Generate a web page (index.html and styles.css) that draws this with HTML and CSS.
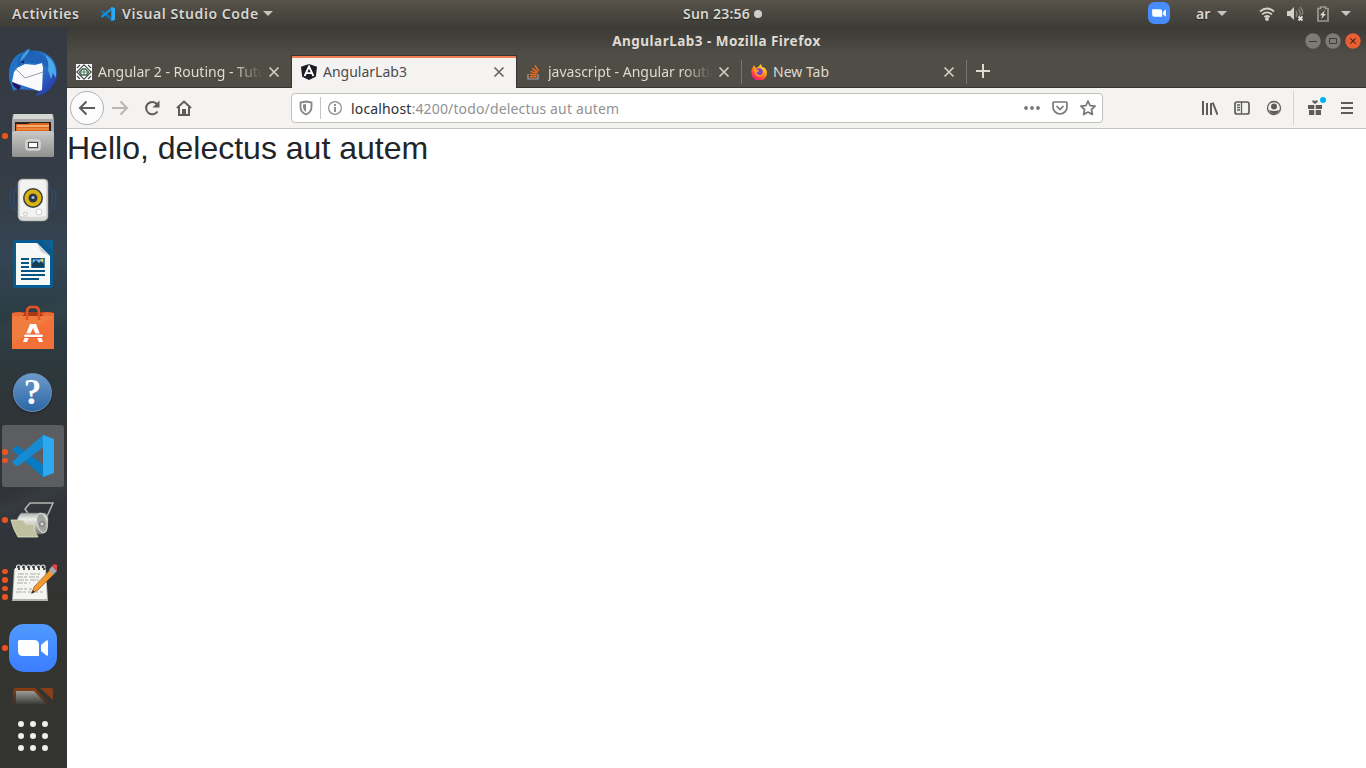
FILE: index.html
```html
<!DOCTYPE html>
<html lang="en">
<head>
<meta charset="utf-8">
<title>AngularLab3 - Mozilla Firefox</title>
<link rel="stylesheet" href="styles.css">
</head>
<body>
<header class="topbar">
  <div class="top-left">
    <span class="activities">Activities</span>
    <svg class="mini-code" width="16" height="16" viewBox="0 0 48 48"><path fill="#0879bf" d="M2 17l5-4 29 23v9z"/><path fill="#1593dc" d="M2 31l5 4 29-23V3z"/><path fill="#29aaf2" d="M34 2l11 5v34l-11 5z"/></svg>
    <span class="app-name">Visual Studio Code</span>
    <svg class="caret" width="10" height="5" viewBox="0 0 10 5"><path d="M0 0h10L5 5z"/></svg>
  </div>
  <div class="clock"><span>Sun 23:56</span><i></i></div>
  <div class="status">
    <svg class="tray-zoom" width="22" height="22" viewBox="0 0 48 48"><rect width="48" height="48" rx="14" fill="#488bff"/><path fill="#fff" d="M9 16h17q5 0 5 5v11H14q-5 0-5-5zM33 21l6-5v16l-6-5z"/></svg>
    <span class="lang">ar</span>
    <svg class="caret lang-caret" width="10" height="5" viewBox="0 0 10 5"><path d="M0 0h10L5 5z"/></svg>
    <svg class="wifi" width="16" height="14" viewBox="0 0 16 14" fill="none" stroke="#d3d0ca" stroke-width="1.8"><path d="M1 4.5q7-6 14 0M3 7.4q5-4 10 0M5.3 10q2.7-2 5.4 0"/><circle cx="8" cy="12" r="1" fill="#d3d0ca"/></svg>
    <svg class="volume" width="18" height="16" viewBox="0 0 18 16"><path fill="#d3d0ca" d="M0 5h3l4-4v13l-4-4H0z"/><path fill="none" stroke="#85827a" stroke-width="1.4" d="M9 5q2 3 0 6M11.5 3q3 4 1 7M13 1q4 4 2 8"/><path stroke="#e4e1da" stroke-width="1.8" d="M11.5 10.5l4 4m0-4l-4 4"/></svg>
    <svg class="battery" width="12" height="16" viewBox="0 0 12 16"><path fill="none" stroke="#9b9890" stroke-width="1.7" d="M1 2.5h2.5V1h5v1.500H11V15H1z"/><path fill="#e4e1da" d="M8 4L3 9.200h2.500L4 13l5-5H6.500z"/></svg>
    <svg class="caret" width="10" height="5" viewBox="0 0 10 5"><path d="M0 0h10L5 5z"/></svg>
  </div>
</header>
<div class="desktop">
<nav class="dock">
  <div class="slot">
    <svg width="48" height="48" viewBox="0 0 48 48"><defs><linearGradient id="bird" x1="0" y1="0" x2="1" y2="1"><stop stop-color="#1f6fc0"/><stop offset=".55" stop-color="#2877cf"/><stop offset="1" stop-color="#29249a"/></linearGradient></defs><path fill="url(#bird)" d="M0 28C-1 15 7 5 15 4q4-4 6-3l-1 2c17-2 28 8 28 22 0 11-8 20-17 22l-5 1 5-5-22-2-5 2C4 39 0 35 0 28z"/><path fill="#2062b8" d="M13 6c4-4 10-3 15-2 9 3 13 10 13 17l-8-5-18-2-6 4c-1-4 0-9 4-12z"/><path fill="#4aa9e6" d="M36 7c9 5 12 13 11 23l-3-5-2 6-3-9c1-6 0-11-3-15z"/><path fill="#45a0dc" d="M11 13q3-9 10-12-2 5-8 11z"/><path fill="#fafafc" d="M8 20l8-4 10 1 7-2 1 5-1 22-3 1L3 34l2-10z"/><path fill="none" stroke="#9b9da7" d="M7 21l9 9 18-6"/><circle cx="14" cy="14" r="1.300" fill="#182547"/><path fill="#28125e" d="M3 34l9 4-2 4C6 40 4 38 3 34z"/></svg>
  </div>
  <div class="slot"><span class="runs"><i></i></span>
    <svg width="48" height="48" viewBox="0 0 48 48"><defs><linearGradient id="metal" x1="0" y1="0" x2="0" y2="1"><stop stop-color="#c9c9c7"/><stop offset="1" stop-color="#90908e"/></linearGradient></defs><path fill="#a6a6a4" d="M4 2h40l1 6v34H3V8z"/><path fill="#d5d5d3" d="M5 2h38l1 5H4z"/><path fill="#272320" d="M6 10h36v10H6z"/><path fill="#df661f" d="M7 12h12l2-1h19v9H7z"/><path stroke="#ffe0a9" stroke-width="1.200" d="M8 14h32"/><path stroke="#f3a45a" d="M8 17h32"/><path fill="url(#metal)" d="M5 19h38l2 2v23q0 1-2 1H5q-2 0-2-1V21z"/><rect x="17" y="28" width="14" height="10" rx="2" fill="#bbb" stroke="#eee"/><rect x="19.500" y="30.500" width="9" height="5" fill="#fff" stroke="#4b4b4b"/></svg>
  </div>
  <div class="slot">
    <svg width="48" height="48" viewBox="0 0 48 48"><path fill="none" stroke="#31547f" stroke-width="1.300" opacity=".7" d="M8 9q-7 14 0 28M3 13q-4 10 0 20M40 9q7 14 0 28M45 13q4 10 0 20"/><path fill="#d9d9d7" stroke="#999" stroke-width=".6" d="M14 3h21q4 0 4 4v34q-1 4-5 4H14q-4 0-5-4V8q0-5 5-5z"/><path fill="#f3f3f1" d="M14 4h20q3 0 3 3v33q-11 2-26 0V8q0-3 3-4z"/><circle cx="24" cy="22" r="10" fill="#3c3d40"/><circle cx="24" cy="22" r="6.500" fill="none" stroke="#d9b40e" stroke-width="4"/><circle cx="24" cy="22" r="3.500" fill="#29384d"/><circle cx="24" cy="21.500" r="1.500" fill="#a9bdd3"/><circle cx="30" cy="36" r="3" fill="#fff" stroke="#ccc"/><circle cx="16.500" cy="38" r="2" fill="none" stroke="#ccc"/></svg>
  </div>
  <div class="slot">
    <svg width="48" height="48" viewBox="0 0 48 48"><path fill="#075b91" d="M6 0h26l12 13v33q0 2-2 2H6q-2 0-2-2V2q0-2 2-2z"/><path fill="#0d5f95" d="M32 0h12v12z"/><path fill="#f7f8f8" d="M7 3h21l13 13v29H7z"/><path fill="#d2d4d5" d="M28 3l13 13-9-4z"/><path stroke="#075580" stroke-width="2" d="M12 19h8M12 23h8M12 27h8M12 31h24M12 35h24M12 39h18"/><path fill="#7fc1e8" stroke="#075580" stroke-width="1.500" d="M23 18.700h12v8.500H23z"/><path fill="#173e56" d="M23 27v-3l4-4 3 3 2-2 3 3v3z"/><circle cx="33" cy="20" r="1.500" fill="#edc64c"/></svg>
  </div>
  <div class="slot">
    <svg width="48" height="48" viewBox="0 0 48 48"><path fill="#a63918" d="M4 8h40l-3 6H7z"/><path fill="#eb6b36" d="M3 9l7-1 6 1-4 5H3zm42 0l-7-1-6 1 4 5h9z"/><path fill="#f17139" d="M3 12h42v33H3z"/><path fill="#f08344" d="M3 12h42L3 40z" opacity=".65"/><path fill="none" stroke="#e65322" stroke-width="2.600" d="M18 16V8q0-4 3-5h6q3 1 3 5v8"/><path fill="#fff" d="M21 20h6l7 18h-4l-6-14-6 14h-4z"/><rect x="14.500" y="30" width="20" height="3.500" rx="1.700" fill="#fff" stroke="#ef5a25"/></svg>
  </div>
  <div class="slot">
    <div class="help">?</div>
  </div>
  <div class="slot"><span class="focused"></span><span class="runs"><i></i><i></i></span>
    <svg width="48" height="48" viewBox="0 0 48 48"><path fill="#087bc3" d="M3 18q3-4 6-4l27 20v11h-2z"/><path fill="#168bd2" d="M3 30q3 4 6 4l27-20V3h-2z"/><path fill="#2ba8f0" d="M34 3l11 4v34l-11 4z"/></svg>
  </div>
  <div class="slot"><span class="runs"><i></i></span>
    <svg width="48" height="48" viewBox="0 0 48 48"><defs><linearGradient id="drum" x1="0" y1="0" x2="0" y2="1"><stop stop-color="#aaada8"/><stop offset=".3" stop-color="#eceeea"/><stop offset="1" stop-color="#777a75"/></linearGradient></defs><path fill="none" stroke="#b4b8b3" stroke-width="1.500" d="M20 19l-4-6 5-6h23l-9 20"/><path fill="url(#drum)" stroke="#676a66" stroke-width=".6" d="M12 17h24q5 3 2 14l-4 7H11Q4 25 12 17z"/><ellipse cx="33" cy="27" rx="5" ry="10" fill="#a2a59f" stroke="#d7d9d4" transform="rotate(-12 33 27)"/><circle cx="33" cy="28" r="2.300" fill="#d3d5d0" stroke="#686b65"/><path fill="#bec0a0" stroke="#e4e5ca" stroke-width=".8" d="M2 24h12l3 4h8q-1 6 4 13H9Q4 33 2 24z"/></svg>
  </div>
  <div class="slot"><span class="runs"><i></i><i></i><i></i><i></i></span>
    <svg width="48" height="48" viewBox="0 0 48 48"><path fill="#b4b5b1" d="M5 9h32l2 32H3z"/><path fill="#f4f4f1" d="M6 8h30l2 31H4z"/><g fill="none" stroke="#eee" stroke-width="1.200"><circle cx="9.500" cy="7" r="2"/><circle cx="14.500" cy="7" r="2"/><circle cx="19.500" cy="7" r="2"/><circle cx="24.500" cy="7" r="2"/><circle cx="29.500" cy="7" r="2"/><circle cx="34" cy="7" r="2"/></g><path stroke="#4b4c49" stroke-width="2" stroke-dasharray="2 3" d="M9 9h27"/><path stroke="#aaa" stroke-dasharray="6 1 3 2" d="M9 14h24M8 17h23M9 20h21M8 23h13M8 29h15M7 32h27"/><path fill="#f19a31" stroke="#965517" stroke-width=".7" d="M25 27L41 10l4 4-16 16-6 3z"/><path fill="#303030" d="M24 30l2 2-4 2z"/><path fill="#a4a8a9" d="M40 10l3-4 5 5-4 4z"/><path fill="#e94343" d="M43 6q2-3 5-1v6z"/></svg>
  </div>
  <div class="slot"><span class="runs"><i></i></span>
    <svg width="48" height="48" viewBox="0 0 48 48"><defs><linearGradient id="zoomfill" x1="0" y1="0" x2="0" y2="1"><stop stop-color="#4f9aff"/><stop offset="1" stop-color="#3b7eff"/></linearGradient></defs><rect width="48" height="48" rx="15" fill="url(#zoomfill)"/><path fill="#fff" d="M10 16h15q5 0 5 5v11H14q-5 0-5-5V17zM32 21l5.500-4.500H39v15h-1.500L32 27z"/></svg>
  </div>
  <div class="partial">
    <svg width="40" height="16" viewBox="0 0 40 16"><defs><linearGradient id="gray" x1="0" y1="0" x2="0" y2="1"><stop stop-color="#9b9b97"/><stop offset="1" stop-color="#3b3b38"/></linearGradient><linearGradient id="rust" x1="0" y1="0" x2="0" y2="1"><stop stop-color="#8a3c12"/><stop offset="1" stop-color="#3b312b"/></linearGradient></defs><path fill="url(#rust)" d="M2 0h20l15 16H0V2z"/><path fill="url(#gray)" d="M3 3h18l12 13H3z"/><path fill="#87401a" d="M27 0h11q2 0 2 2v10z"/></svg>
  </div>
  <div class="apps"><i></i><i></i><i></i><i></i><i></i><i></i><i></i><i></i><i></i></div>
</nav>
<main class="window">
  <div class="titlebar"><span class="win-title">AngularLab3 - Mozilla Firefox</span>
    <div class="buttons">
      <svg width="16" height="16" viewBox="0 0 16 16"><circle cx="8" cy="8" r="7.700" fill="#7d7b73"/><path stroke="#3b3a36" d="M4 8.500h8"/></svg>
      <svg width="16" height="16" viewBox="0 0 16 16"><circle cx="8" cy="8" r="7.700" fill="#7d7b73"/><path fill="none" stroke="#3b3a36" d="M4.500 5.500h7v5h-7z"/></svg>
      <svg width="16" height="16" viewBox="0 0 16 16"><circle cx="8" cy="8" r="7.700" fill="#eb5e33"/><path stroke="#4c2a1c" stroke-width="1.200" d="M5.300 5.300l5.400 5.400m0-5.400l-5.400 5.400"/></svg>
    </div>
  </div>
  <div class="tabs">
    <div class="tab"><svg class="fav" width="16" height="16" viewBox="0 0 16 16"><path fill="#fff" d="M0 0h16v16H0z"/><path fill="none" stroke="#464947" stroke-width="1.100" d="M8 .8L15.200 8 8 15.200.8 8zM1 4l3-3M12 1l3 3M1 12l3 3M12 15l3-3"/><path fill="none" stroke="#35694b" stroke-width="1.400" d="M3.500 8l3-3h3l3 3-2 3h-5z"/><path stroke="#4b7c62" d="M5 8h6M8 5v6"/></svg><span class="tab-title cut">Angular 2 - Routing - Tuto</span><svg class="x" width="12" height="12" viewBox="0 0 12 12"><path d="M1.500 1.500l9 9m0-9l-9 9"/></svg></div>
    <div class="tab active"><svg class="fav" width="16" height="16" viewBox="0 0 16 16"><path fill="#1b1d25" d="M8 0l8 2.700-1.200 10L8 16l-6.800-3.300L0 2.700z"/><path fill="none" stroke="#fff" stroke-width="1.800" d="M3.600 12L8 2.500l4.400 9.500M5.500 9.200h5"/></svg><span class="tab-title">AngularLab3</span><svg class="x" width="12" height="12" viewBox="0 0 12 12"><path d="M1.500 1.500l9 9m0-9l-9 9"/></svg></div>
    <div class="tab"><svg class="fav so" width="16" height="16" viewBox="0 0 16 16" fill="none"><path stroke="#a1a3a1" stroke-width="1.200" d="M2 10v5h10v-5"/><path stroke="#ed6b18" stroke-width="1.500" d="M4 12.700h6.500M4 10.300l6.500.8M4.600 7.400l6.200 2M6.300 4.300l5.200 4M9 1.500l3.600 5.500"/></svg><span class="tab-title cut">javascript - Angular routin</span><svg class="x" width="12" height="12" viewBox="0 0 12 12"><path d="M1.500 1.500l9 9m0-9l-9 9"/></svg></div>
    <div class="tab last divided"><svg class="fav" width="16" height="16" viewBox="0 0 16 16"><defs><linearGradient id="fox" x1=".8" y1="0" x2=".2" y2="1"><stop stop-color="#fff44f"/><stop offset=".4" stop-color="#ff980e"/><stop offset=".75" stop-color="#ff3750"/><stop offset="1" stop-color="#e31587"/></linearGradient></defs><path fill="url(#fox)" d="M2 3l1-2 2 3 2-1 3-3 1 3c3 0 5 3 5 6a7.800 7.800 0 0 1-15.600 0C.2 6 1 4 2 3z"/><circle cx="8" cy="8" r="3.700" fill="#7543d3"/><path fill="#ff9b20" d="M3 5l5 1-1 2-2 1 3 2c2 1 4-1 4-3 1 4-3 6-6 4-2-1-3-4-3-7z"/></svg><span class="tab-title">New Tab</span><svg class="x" width="12" height="12" viewBox="0 0 12 12"><path d="M1.500 1.500l9 9m0-9l-9 9"/></svg></div>
    <div class="newtab divided"><svg width="14" height="14" viewBox="0 0 14 14"><path stroke="#dfdbd2" stroke-width="2" d="M7 0v14M0 7h14"/></svg></div>
  </div>
  <div class="toolbar">
    <div class="back"><svg width="18" height="16" viewBox="0 0 18 16"><path d="M17 8H2M8.500 1.500L2 8l6.500 6.500"/></svg></div>
    <svg class="forward" width="18" height="16" viewBox="0 0 18 16"><path d="M1 8h15M9.500 1.500L16 8l-6.500 6.500"/></svg>
    <svg class="reload" width="16" height="16" viewBox="0 0 16 16"><path d="M13.500 11.500A6.200 6.200 0 1 1 13 4"/><path fill="#5d5c5a" stroke="none" d="M15.500 .5v7h-7z"/></svg>
    <svg class="home" width="16" height="16" viewBox="0 0 16 16"><path d="M1 8l7-6.500L15 8M3 7v8h10V7"/><path fill="#5d5c5a" stroke="none" d="M6 9h4v6H6z"/></svg>
    <div class="urlbar">
      <svg class="shield" width="14" height="16" viewBox="0 0 14 16"><path fill="none" stroke="#858585" stroke-width="1.800" d="M7 1.500l5.500 1v4.500q0 5-5.500 7.500Q1.500 12 1.500 7V2.500z"/><path fill="#858585" d="M7 4v8Q4 10 4 7V4.500z"/></svg>
      <span class="rule"></span>
      <svg class="info" width="14" height="14" viewBox="0 0 14 14"><circle cx="7" cy="7" r="6.400" fill="none" stroke="#8b8b8b" stroke-width="1.200"/><path stroke="#858585" stroke-width="1.800" d="M7 6v5M7 3v2"/></svg>
      <span class="address"><b>localhost</b>:4200/todo/delectus aut autem</span>
      <svg class="dots" width="16" height="4" viewBox="0 0 16 4" fill="#777"><circle cx="2" cy="2" r="1.900"/><circle cx="8" cy="2" r="1.900"/><circle cx="14" cy="2" r="1.900"/></svg>
      <svg class="pocket" width="16" height="14" viewBox="0 0 16 14" fill="none" stroke="#777" stroke-width="1.700"><path d="M2 1h12q1 0 1 1v4a7 7 0 0 1-14 0V2q0-1 1-1z"/><path d="M4.500 5L8 8.500 11.500 5"/></svg>
      <svg class="star" width="16" height="16" viewBox="0 0 16 16"><path fill="none" stroke="#777" stroke-width="1.700" stroke-linejoin="round" d="M8 1l2.100 4.600 5 .5-3.700 3.400 1 5L8 12l-4.400 2.500 1-5L.9 6.100l5-.5z"/></svg>
    </div>
    <div class="tools">
      <svg width="16" height="16" viewBox="0 0 16 16" stroke="#5d5c5a" stroke-width="2"><path d="M1 1v14M5 3v12M9 3v12M10.700 2.500L15.500 14.700"/></svg>
      <svg width="16" height="16" viewBox="0 0 16 16" fill="none" stroke="#5d5c5a" stroke-width="1.700"><rect x="1" y="2" width="14" height="12" rx="2"/><path stroke-width="1.300" d="M7.500 2v12M3 5h3M3 7.500h3M3 10h3"/></svg>
      <svg width="16" height="16" viewBox="0 0 16 16"><circle cx="8" cy="8" r="6.500" fill="none" stroke="#5d5c5a" stroke-width="1.300"/><circle cx="8" cy="6.500" r="3" fill="#5d5c5a"/><path fill="#5d5c5a" d="M3 10q5 2 10 0-1 4-5 4t-5-4z"/></svg>
      <span class="tool-rule"></span>
      <svg class="gift" width="20" height="20" viewBox="0 0 20 20"><path fill="#5d5c5a" d="M1 8h6.300v4H1zm7.700 0H15v4H8.700zM2 13h5.300v5H2zm6.700 0H14v5H8.700zM8 7Q4.500 5 5.500 3.500q1.500-1 2.500 1 1-2 2.500-1Q11.500 5 8 7z"/><circle cx="16" cy="3" r="3" fill="#00b3f4"/></svg>
      <svg width="12" height="12" viewBox="0 0 12 12" stroke="#5d5c5a" stroke-width="2"><path d="M0 1h12M0 6h12M0 11h12"/></svg>
    </div>
  </div>
  <article class="page"><h1>Hello, delectus aut autem</h1></article>
</main>
</div>
</body>
</html>
```
FILE: styles.css
```css
* { box-sizing: border-box; }
body { margin: 0; width: 1366px; height: 768px; overflow: hidden; font: 14px/20px "Noto Sans", sans-serif; display: flex; flex-direction: column; background: #fff; }
svg { display: block; flex: none; }
.topbar { height: 27px; flex: none; display: grid; grid-template-columns: 683px auto 1fr; align-items: center; color: #d9d6d0; font-weight: 600; background: linear-gradient(#57534a, #3d3c37); text-shadow: 0 1px 1px #272622; }
.top-left { display: flex; align-items: center; padding-left: 12px; }
.activities { width: 88px; letter-spacing: .5px; }
.app-name { margin-left: 6px; width: 137px; white-space: nowrap; letter-spacing: .58px; }
.caret { fill: #c7c5bf; margin-left: 4px; }
.top-left .caret { margin-left: 4px; }
.clock { display: flex; align-items: center; gap: 4px; width: 82px; white-space: nowrap; letter-spacing: .2px; }
.clock i { width: 8px; height: 8px; border-radius: 50%; background: #d0cec9; }
.status { display: flex; align-items: center; justify-content: flex-end; padding-right: 15px; }
.tray-zoom { margin-top: -2px; }
.lang { margin-left: 26px; width: 15px; }
.lang-caret { margin-left: 6px; margin-right: 32px; }
.volume { margin-left: 12px; }
.battery { margin-left: 12px; margin-right: 8px; }
.desktop { flex: 1; display: flex; min-height: 0; }
.dock { width: 67px; flex: none; padding-top: 13px; background: linear-gradient(158deg, transparent 38%, #52676622 40%, transparent 43%, transparent 61%, #5d6c7022 63%, transparent 66%), linear-gradient(#353a42 0%, #353d47 23%, #344554 31%, #2b3b42 40%, #303436 54%, #30333a 68%, #33332f 79%, #333330 100%); }
.slot { position: relative; height: 64px; display: flex; align-items: center; padding-left: 9px; }
.slot svg { position: relative; }
.focused { position: absolute; left: 2px; top: 1px; width: 62px; height: 62px; border-radius: 3px; background: #5b5d60; }
.runs { position: absolute; left: 2px; top: 0; height: 64px; display: flex; flex-direction: column; justify-content: center; gap: 3px; }
.runs i { width: 5.500px; height: 5.500px; border-radius: 50%; background: #e95420; }
.help { width: 39px; height: 39px; margin: 1px 0 0 4px; border-radius: 50%; border: 1px solid #6c91ba; color: #fff; background: linear-gradient(#6a9aca, #2d67a7); text-align: center; font: 700 35px/37px "Liberation Serif", serif; box-shadow: 0 1px 2px #18202b; }
.partial { height: 32px; padding: 8px 0 0 13px; }
.apps { display: grid; grid-template-columns: repeat(3, 6px); gap: 6px; padding: 9px 0 0 18px; }
.apps i { width: 6px; height: 6px; border-radius: 50%; background: #f0efed; }
.window { flex: 1; min-width: 0; display: flex; flex-direction: column; background: #fff; }
.titlebar { height: 28px; flex: none; position: relative; display: flex; justify-content: center; align-items: center; background: linear-gradient(#3b3a36, #504d46); color: #dfdbd2; font-weight: 700; font-size: 13.500px; letter-spacing: .48px; }
.buttons { position: absolute; right: 5px; top: 6px; display: flex; gap: 4px; }
.tabs { height: 33px; flex: none; display: flex; background: #504d46; border-bottom: 1px solid #35342f; color: #dfdbd2; }
.tab { width: 225px; height: 32px; display: flex; align-items: center; padding: 1px 12px 0 9px; position: relative; }
.tab:first-child, .tab:nth-child(3) { width: 224px; padding-right: 11px; }
.tab.last { padding-left: 10px; padding-right: 11px; }
.tab-title { margin-left: 6px; flex: 1; overflow: hidden; white-space: nowrap; }
.cut { -webkit-mask-image: linear-gradient(90deg, #000 calc(100% - 30px), transparent); mask-image: linear-gradient(90deg, #000 calc(100% - 30px), transparent); }
.x { fill: none; stroke: #d1cec6; stroke-width: 1.700; margin-left: 5px; }
.tab.active { width: 226px; height: 33px; background: #f4f3f2; color: #4c4c4c; border: solid #35342f; border-width: 1px 1px 0; box-shadow: inset 0 2px #ef7c52; padding: 0 11px 1px 9px; }
.active .x { stroke: #666; }
.divided { background: linear-gradient(#77746d, #77746d) 0 5px / 1px 24px no-repeat; }
.newtab { padding: 9px 0 0 10px; width: 30px; }
.toolbar { height: 41px; flex: none; display: flex; align-items: center; background: #f4f3f2; border-bottom: 1px solid #c6c4c1; padding-left: 3px; }
.toolbar > svg, .back svg { fill: none; stroke: #5d5c5a; stroke-width: 2; }
.back { width: 34px; height: 34px; border: 1px solid #b3b1ae; border-radius: 50%; background: #fcfcfc; display: grid; place-items: center; }
.toolbar > .forward { margin-left: 7px; stroke: #b9b7b4; }
.reload { margin-left: 15px; }
.home { margin-left: 16px; }
.urlbar { width: 812px; height: 30px; margin-left: 99px; display: flex; align-items: center; padding: 0 6px 0 7px; background: #fff; border: 1px solid #c3c1be; border-radius: 4px; }
.rule { width: 1px; height: 22px; background: #c7c6c5; margin-left: 7px; }
.info { margin-left: 7px; }
.address { margin-left: 9px; padding-top: 1px; flex: 1; color: #929292; letter-spacing: .15px; }
.address b { font-weight: 400; color: #303030; }
.pocket { margin-left: 12px; }
.star { margin-left: 12px; }
.tools { display: flex; align-items: center; gap: 16px; margin-left: 99px; }
.tool-rule { width: 1px; height: 34px; background: #d5d3d0; margin-left: -5px; }
.gift { margin: -2px -2px 0 -3px; }
.page { padding: 0; }
h1 { margin: 0; font: 400 32px/38px "Liberation Sans", Arial, sans-serif; color: #212529; }
```
